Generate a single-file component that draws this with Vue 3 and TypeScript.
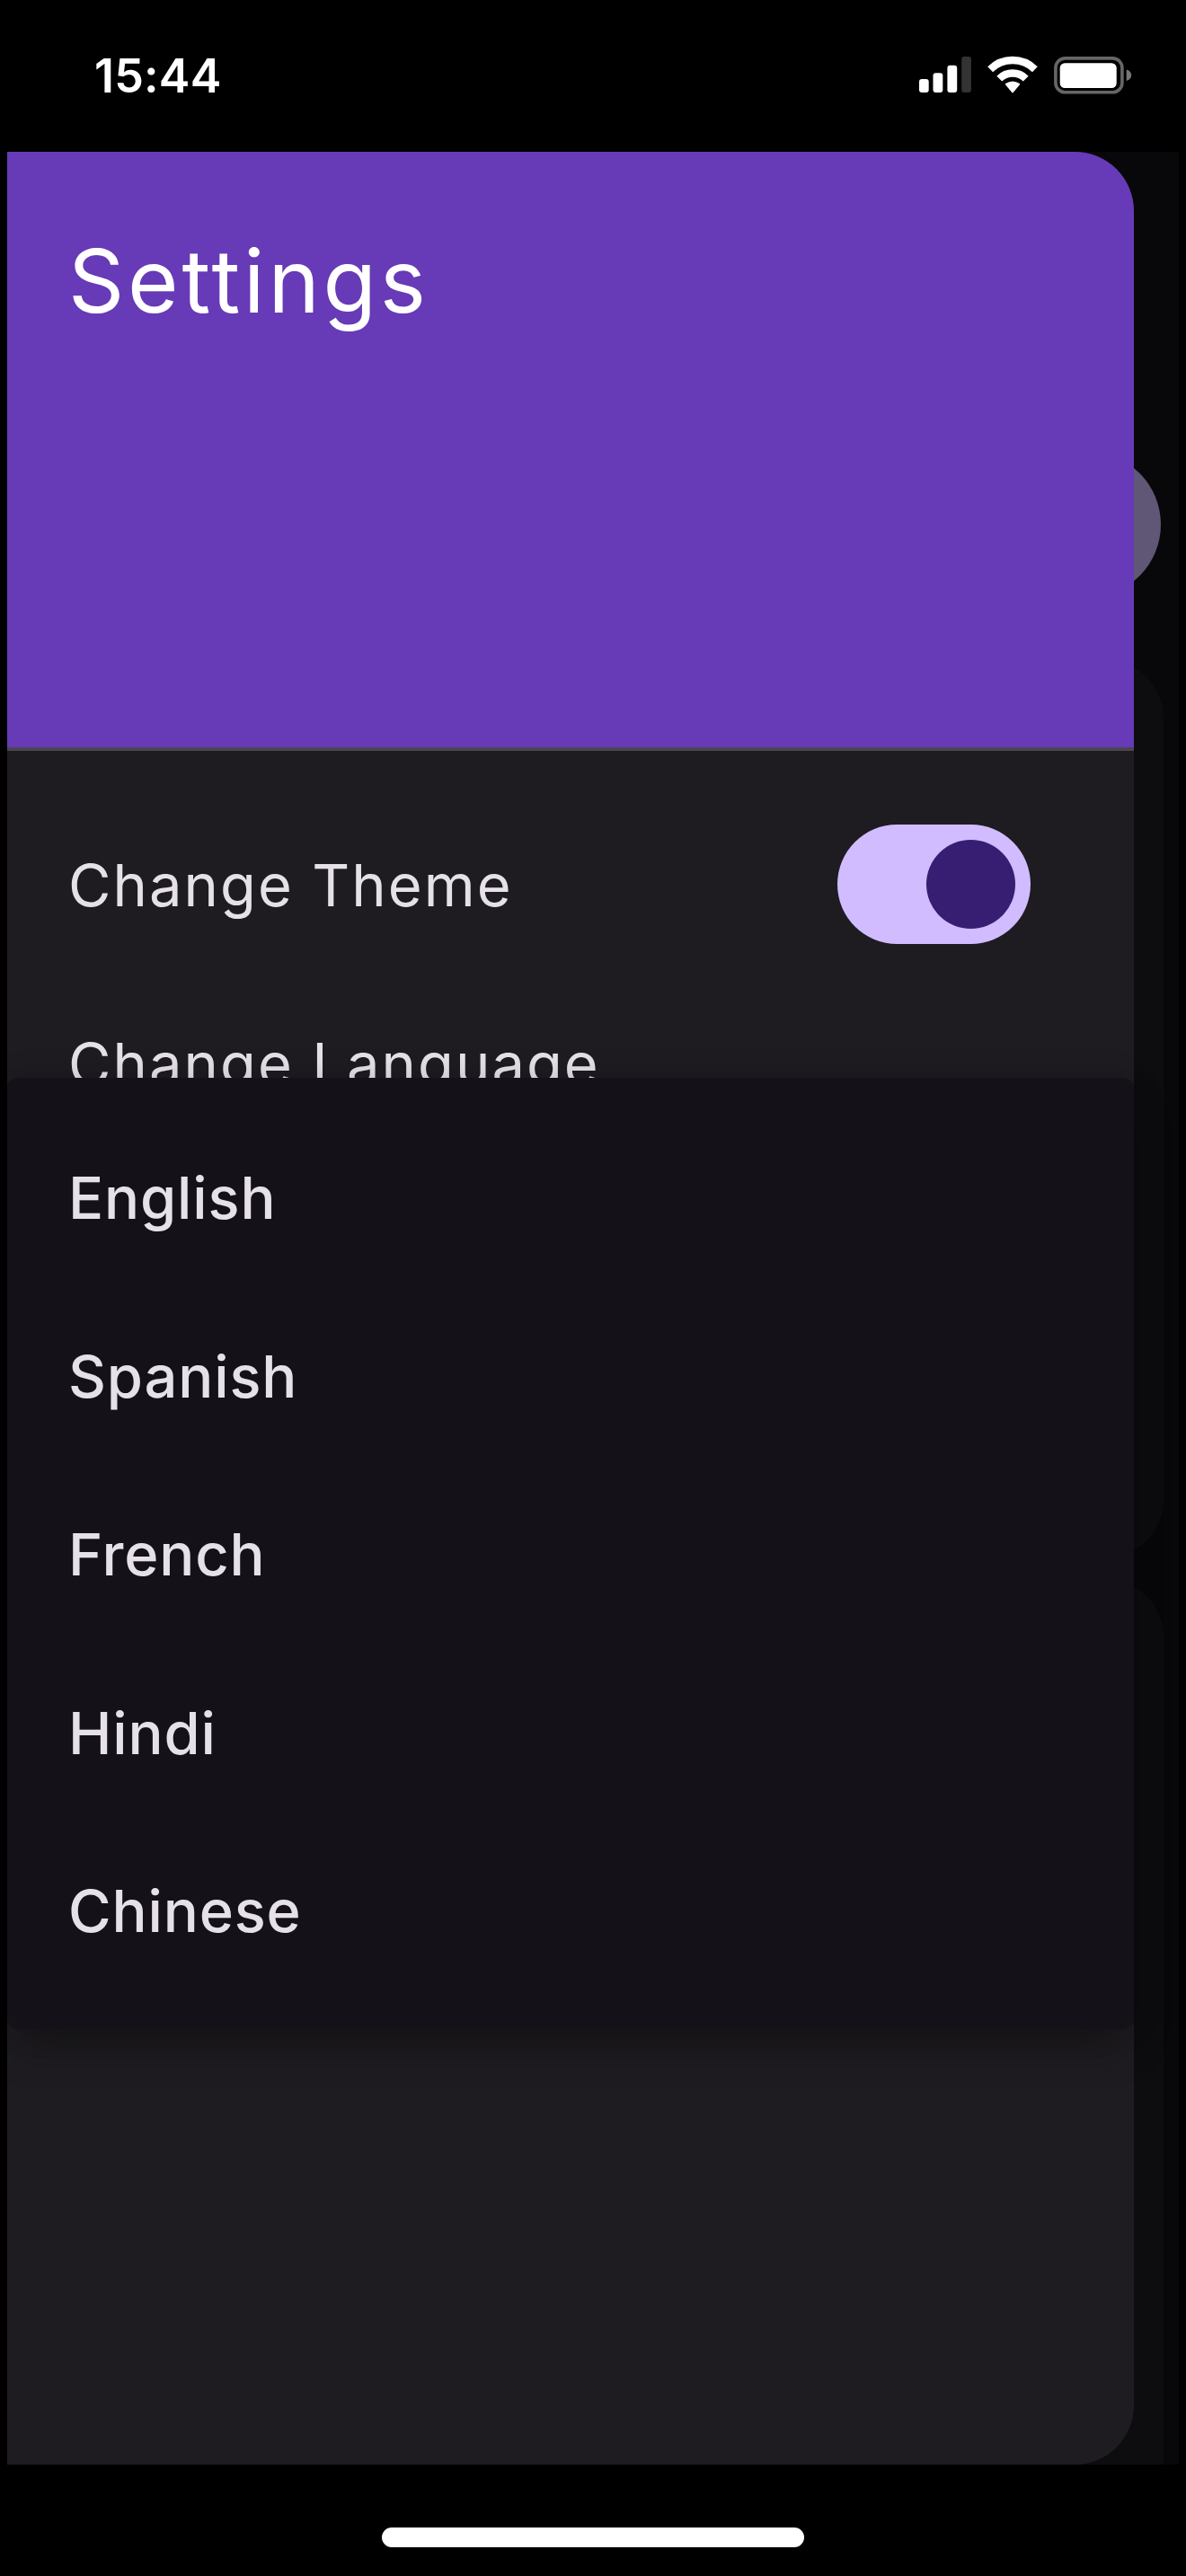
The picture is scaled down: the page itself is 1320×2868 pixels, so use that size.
<script setup lang="ts">
import { ref } from 'vue'

const darkTheme = ref(true)

interface Language {
  code: string
  label: string
}

const languages: Language[] = [
  { code: 'en', label: 'English' },
  { code: 'es', label: 'Spanish' },
  { code: 'fr', label: 'French' },
  { code: 'hi', label: 'Hindi' },
  { code: 'zh', label: 'Chinese' },
]
</script>

<template>
  <div class="phone">
    <header class="status-bar">
      <span class="time">15:44</span>
      <div class="status-icons">
        <svg class="signal" width="58" height="40" viewBox="0 0 58 40">
          <rect x="0" y="25" width="10.7" height="15" rx="3" fill="#fff" />
          <rect x="15.5" y="18.3" width="10.8" height="21.7" rx="3" fill="#fff" />
          <rect x="31.4" y="9.7" width="10.8" height="30.3" rx="3" fill="#fff" />
          <rect x="47.2" y="0" width="10.7" height="40" rx="3" fill="#333" />
        </svg>
        <svg class="wifi" width="56" height="42" viewBox="0 0 168 126">
          <g fill="none" stroke="#fff" stroke-width="25">
            <path d="M9.5 45.5A106.5 106.5 0 0 1 158.5 45.5" />
            <path d="M39.8 76.8A62.5 62.5 0 0 1 128.2 76.8" />
          </g>
          <path d="M60 96.500Q58.500 94.500 60.500 93Q84 78 107.500 93Q109.500 94.500 108 96.500L86 123Q84 125.500 82 123Z" fill="#fff" />
        </svg>
        <svg class="battery" width="87" height="42" viewBox="0 0 87 42">
          <rect x="1.900" y="1.900" width="74" height="37.800" rx="10.500" fill="none" stroke="#666" stroke-width="3.600" />
          <rect x="6.700" y="7.200" width="63" height="27.800" rx="5.500" fill="#fff" />
          <path d="M80.700 14.500C84.500 15.500 86.200 18 86.200 20.700S84.500 26 80.700 27Z" fill="#777" />
        </svg>
      </div>
    </header>

    <main class="screen">
      <div class="page">
        <div class="avatar"></div>
        <div class="card first"></div>
        <div class="card second"></div>
      </div>

      <aside class="drawer">
        <div class="drawer-header">
          <h1>Settings</h1>
        </div>
        <div class="row">
          <span>Change Theme</span>
          <button
            class="switch"
            :class="{ on: darkTheme }"
            role="switch"
            :aria-checked="darkTheme"
            @click="darkTheme = !darkTheme"
          >
            <i class="thumb"></i>
          </button>
        </div>
        <div class="row">
          <span>Change Language</span>
        </div>
      </aside>

      <ul class="menu">
        <li v-for="lang in languages" :key="lang.code">{{ lang.label }}</li>
      </ul>
    </main>

    <footer class="home-area">
      <div class="home-indicator"></div>
    </footer>
  </div>
</template>

<style>
body {
  margin: 0;
  background: #000;
}
</style>

<style scoped>
.phone {
  width: 1320px;
  height: 2868px;
  overflow: hidden;
  display: flex;
  flex-direction: column;
  background: #000;
  font-family: Inter, 'Liberation Sans', sans-serif;
  color: #e6e0e9;
}

.status-bar {
  box-sizing: border-box;
  height: 169px;
  flex: none;
  display: flex;
  justify-content: space-between;
  padding: 0 60.300px 0 105px;
}

.time {
  margin-top: 54.500px;
  font-size: 52px;
  line-height: 60px;
  height: 60px;
  font-weight: 600;
  letter-spacing: 0.200px;
  color: #fff;
}

.status-icons {
  display: flex;
  align-items: flex-start;
  padding-top: 62px;
}

.signal {
  margin: 1.400px 18px 0 0;
}

.wifi {
  margin-right: 17.700px;
}

.battery {
  margin-top: 0.700px;
}

.screen {
  position: relative;
  flex: none;
  height: 2575px;
  margin: 0 8px;
  overflow: hidden;
  background: #08080a;
}

/* Dimmed page that shows past the drawer's right edge */
.page {
  position: absolute;
  inset: 0;
  display: flex;
  flex-direction: column;
  align-items: flex-end;
}

.avatar {
  flex: none;
  width: 162px;
  height: 162px;
  margin: 334px 20px 0 0;
  border-radius: 50%;
  background: #605675;
}

.card {
  flex: none;
  width: 1270px;
  margin-right: 17px;
  background: #0d0d0f;
}

.card.first {
  height: 1001px;
  margin-top: 69px;
  border-radius: 66px;
}

.card.second {
  height: 1000px;
  margin-top: 22px;
  border-radius: 66px 66px 0 0;
}

.drawer {
  position: relative;
  width: 1254px;
  height: 100%;
  overflow: hidden;
  border-radius: 0 66px 66px 0;
  background: #1e1c20;
}

.drawer-header {
  box-sizing: border-box;
  height: 667px;
  margin-bottom: 50px;
  padding: 84px 68px 0;
  border-bottom: 4px solid #4a464f;
  background: #673ab7;
}

h1 {
  margin: 0;
  font-size: 97px;
  line-height: 120px;
  font-weight: 400;
  letter-spacing: 3.800px;
  color: #fff;
}

.row {
  display: flex;
  align-items: center;
  justify-content: space-between;
  height: 199px;
  padding: 0 115px 0 68px;
  font-size: 65px;
  letter-spacing: 2.050px;
}

.switch {
  display: flex;
  align-items: center;
  box-sizing: border-box;
  width: 215px;
  height: 133px;
  margin: 0 0 2px;
  padding: 0 17px;
  border: 0;
  border-radius: 67px;
  background: #49454f;
}

.switch.on {
  justify-content: flex-end;
  background: #d0bcff;
}

.thumb {
  width: 99px;
  height: 99px;
  border-radius: 50%;
  background: #381e72;
}

.menu {
  position: absolute;
  top: 1031px;
  left: 0;
  box-sizing: border-box;
  width: 1254px;
  height: 1059px;
  margin: 0;
  padding: 35px 68px;
  list-style: none;
  border-radius: 12px;
  background: #141218;
  box-shadow:
    0 26px 50px -10px rgba(0, 0, 0, 0.33),
    0 0 36px rgba(0, 0, 0, 0.12);
}

.menu li {
  height: 198.600px;
  line-height: 198.600px;
  font-size: 65px;
  font-weight: 500;
  letter-spacing: 0.850px;
}

.home-area {
  display: flex;
  justify-content: center;
  padding-top: 70px;
}

.home-indicator {
  width: 470px;
  height: 21.500px;
  border-radius: 11px;
  background: #fff;
}
</style>
